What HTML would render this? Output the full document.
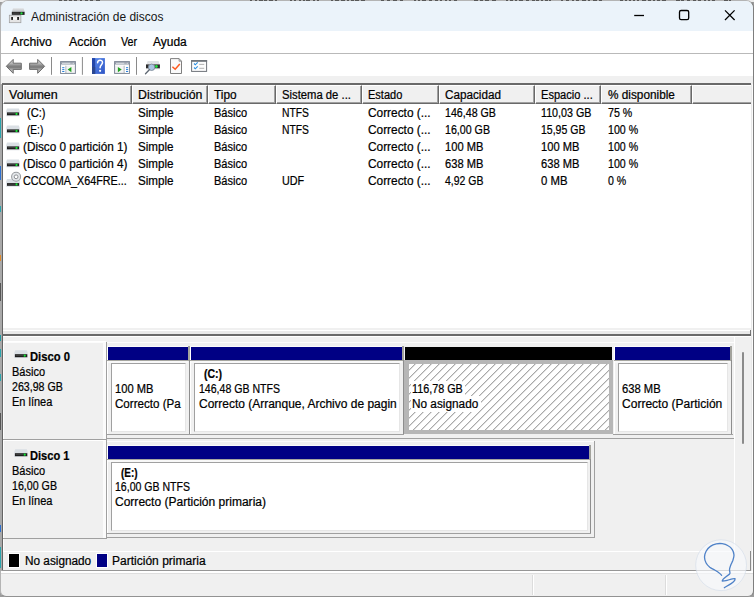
<!DOCTYPE html>
<html lang="es">
<head>
<meta charset="utf-8">
<title>Administración de discos</title>
<style>
html,body{margin:0;padding:0}
body{width:754px;height:597px;overflow:hidden;position:relative;background:#9c9c9c;font-family:"Liberation Sans",sans-serif;font-size:12px;color:#000}
div,span,svg{position:absolute;box-sizing:border-box}
section,header,nav,main,footer{display:block;position:static}
.t{white-space:pre;line-height:16px;font-size:12px;transform-origin:0 0;color:#000;-webkit-text-stroke:0.22px #000}
.b{font-weight:bold}
.wb{background:#fff}
.ttl{-webkit-text-stroke:0;color:#161616}
.hc{background:#f0f0f0;border-left:1px solid #fff;border-top:1px solid #fff}
</style>
</head>
<body>

<div style="left:0px;top:0px;width:754px;height:1.5px;background:#ececec;"></div>
<section id="window">
<div style="left:0px;top:0.4px;width:754px;height:596.3px;background:#f0f0f0;border-radius:8px 8px 6px 6px;border:1px solid #b4b4b4;border-right-color:#7e7e7e;border-bottom-color:#929292;overflow:hidden;"><div style="left:0px;top:0px;width:753px;height:29.2px;background:#ebf3fa;"></div><div style="left:0px;top:29.2px;width:753px;height:23.8px;background:#fff;"></div></div>
<div style="left:59px;top:0px;width:3px;height:0.8px;background:#585858;"></div>
<div style="left:64px;top:0px;width:3px;height:0.8px;background:#585858;"></div>
<div style="left:69px;top:0px;width:3px;height:0.8px;background:#585858;"></div>
<div style="left:74px;top:0px;width:3px;height:0.8px;background:#585858;"></div>
<div style="left:80px;top:0px;width:2px;height:0.8px;background:#585858;"></div>
<div style="left:85px;top:0px;width:3px;height:0.8px;background:#585858;"></div>
<div style="left:90px;top:0px;width:3px;height:0.8px;background:#585858;"></div>
<div style="left:96px;top:0px;width:4px;height:0.8px;background:#585858;"></div>
<div style="left:250px;top:0px;width:2px;height:0.8px;background:#585858;"></div>
<div style="left:255px;top:0px;width:2px;height:0.8px;background:#585858;"></div>
<div style="left:258.5px;top:0px;width:4px;height:0.8px;background:#585858;"></div>
<div style="left:264px;top:0px;width:3px;height:0.8px;background:#585858;"></div>
<div style="left:268.5px;top:0px;width:4px;height:0.8px;background:#585858;"></div>
<div style="left:274.5px;top:0px;width:2px;height:0.8px;background:#585858;"></div>
<div style="left:290px;top:0px;width:2px;height:0.8px;background:#585858;"></div>
<div style="left:294px;top:0px;width:2px;height:0.8px;background:#585858;"></div>
<div style="left:299px;top:0px;width:2px;height:0.8px;background:#585858;"></div>
<div style="left:302.5px;top:0px;width:2px;height:0.8px;background:#585858;"></div>
<div style="left:306px;top:0px;width:4px;height:0.8px;background:#585858;"></div>
<div style="left:313px;top:0px;width:2px;height:0.8px;background:#585858;"></div>
<div style="left:317px;top:0px;width:2px;height:0.8px;background:#585858;"></div>
<div style="left:331px;top:0px;width:2px;height:0.8px;background:#585858;"></div>
<div style="left:334.5px;top:0px;width:4px;height:0.8px;background:#585858;"></div>
<div style="left:340.5px;top:0px;width:4px;height:0.8px;background:#585858;"></div>
<div style="left:346.5px;top:0px;width:2px;height:0.8px;background:#585858;"></div>
<div style="left:350.5px;top:0px;width:3px;height:0.8px;background:#585858;"></div>
<div style="left:355px;top:0px;width:4px;height:0.8px;background:#585858;"></div>
<div style="left:360.5px;top:0px;width:4px;height:0.8px;background:#585858;"></div>
<div style="left:381px;top:0px;width:3px;height:0.8px;background:#585858;"></div>
<div style="left:387px;top:0px;width:3px;height:0.8px;background:#585858;"></div>
<div style="left:393px;top:0px;width:4px;height:0.8px;background:#585858;"></div>
<div style="left:400px;top:0px;width:3px;height:0.8px;background:#585858;"></div>
<div style="left:414px;top:0px;width:2px;height:0.8px;background:#585858;"></div>
<div style="left:418px;top:0px;width:2px;height:0.8px;background:#585858;"></div>
<div style="left:422px;top:0px;width:4px;height:0.8px;background:#585858;"></div>
<div style="left:429px;top:0px;width:3px;height:0.8px;background:#585858;"></div>
<div style="left:435px;top:0px;width:3px;height:0.8px;background:#585858;"></div>
<div style="left:439.5px;top:0px;width:2px;height:0.8px;background:#585858;"></div>
<div style="left:444.5px;top:0px;width:2px;height:0.8px;background:#585858;"></div>
<div style="left:448.5px;top:0px;width:2px;height:0.8px;background:#585858;"></div>
<div style="left:453.5px;top:0px;width:3px;height:0.8px;background:#585858;"></div>
<div style="left:474px;top:0px;width:4px;height:0.8px;background:#585858;"></div>
<div style="left:480px;top:0px;width:3px;height:0.8px;background:#585858;"></div>
<div style="left:485px;top:0px;width:4px;height:0.8px;background:#585858;"></div>
<div style="left:492px;top:0px;width:4px;height:0.8px;background:#585858;"></div>
<div style="left:506px;top:0px;width:2px;height:0.8px;background:#585858;"></div>
<div style="left:510px;top:0px;width:3px;height:0.8px;background:#585858;"></div>
<div style="left:514.5px;top:0px;width:2px;height:0.8px;background:#585858;"></div>
<div style="left:518.5px;top:0px;width:4px;height:0.8px;background:#585858;"></div>
<div style="left:525.5px;top:0px;width:3px;height:0.8px;background:#585858;"></div>
<div style="left:531.5px;top:0px;width:3px;height:0.8px;background:#585858;"></div>
<div style="left:536px;top:0px;width:3px;height:0.8px;background:#585858;"></div>
<div style="left:541px;top:0px;width:2px;height:0.8px;background:#585858;"></div>
<div style="left:544.5px;top:0px;width:3px;height:0.8px;background:#585858;"></div>
<div style="left:549px;top:0px;width:2px;height:0.8px;background:#585858;"></div>
<div style="left:561px;top:0px;width:2px;height:0.8px;background:#585858;"></div>
<div style="left:566px;top:0px;width:3px;height:0.8px;background:#585858;"></div>
<div style="left:572px;top:0px;width:2px;height:0.8px;background:#585858;"></div>
<div style="left:576px;top:0px;width:3px;height:0.8px;background:#585858;"></div>
<div style="left:582px;top:0px;width:4px;height:0.8px;background:#585858;"></div>
<div style="left:588px;top:0px;width:2px;height:0.8px;background:#585858;"></div>
<div style="left:593px;top:0px;width:4px;height:0.8px;background:#585858;"></div>
<div style="left:599px;top:0px;width:3px;height:0.8px;background:#585858;"></div>
<div style="left:620px;top:0px;width:3px;height:0.8px;background:#585858;"></div>
<div style="left:625px;top:0px;width:2px;height:0.8px;background:#585858;"></div>
<div style="left:628.5px;top:0px;width:2px;height:0.8px;background:#585858;"></div>
<div style="left:632.5px;top:0px;width:2px;height:0.8px;background:#585858;"></div>
<div style="left:636.5px;top:0px;width:2px;height:0.8px;background:#585858;"></div>
<div style="left:641.5px;top:0px;width:4px;height:0.8px;background:#585858;"></div>
<div style="left:647.5px;top:0px;width:3px;height:0.8px;background:#585858;"></div>
<div style="left:652.5px;top:0px;width:2px;height:0.8px;background:#585858;"></div>
<div style="left:656.5px;top:0px;width:3px;height:0.8px;background:#585858;"></div>
<div style="left:661.5px;top:0px;width:4px;height:0.8px;background:#585858;"></div>
<div style="left:675.5px;top:0px;width:4px;height:0.8px;background:#585858;"></div>
<div style="left:681px;top:0px;width:3px;height:0.8px;background:#585858;"></div>
<div style="left:687px;top:0px;width:3px;height:0.8px;background:#585858;"></div>
<div style="left:693px;top:0px;width:3px;height:0.8px;background:#585858;"></div>
<div style="left:697.5px;top:0px;width:3px;height:0.8px;background:#585858;"></div>
<div style="left:703.5px;top:0px;width:2px;height:0.8px;background:#585858;"></div>
<div style="left:707.5px;top:0px;width:2px;height:0.8px;background:#585858;"></div>
<div style="left:711.5px;top:0px;width:3px;height:0.8px;background:#585858;"></div>
<div style="left:723.5px;top:0px;width:4px;height:0.8px;background:#585858;"></div>
<div style="left:729px;top:0px;width:2px;height:0.8px;background:#585858;"></div>
<header id="titlebar">
<svg style="left:8px;top:6px" width="20" height="18" viewBox="8 6 20 18">
<defs><linearGradient id="dg" x1="0" y1="0" x2="0" y2="1"><stop offset="0" stop-color="#e0e2e4"/><stop offset="1" stop-color="#bfc2c6"/></linearGradient></defs>
<path d="M13 8.2h10.6l1 3.6H11.9z" fill="url(#dg)"/>
<rect x="11.8" y="11.8" width="12.8" height="3.1" fill="#222"/>
<rect x="12.6" y="12.7" width="7" height="0.8" fill="#555"/>
<circle cx="21.5" cy="13.4" r="1.15" fill="#1fe03a"/>
<rect x="9.3" y="15.2" width="11.6" height="7.5" fill="#e4e4e4" stroke="#9a9a9a" stroke-width="0.7"/>
<rect x="11.2" y="17" width="1.8" height="2.9" fill="#222"/>
<rect x="17.1" y="17" width="1.9" height="2.9" fill="#222"/>
<rect x="13" y="17.4" width="4.1" height="2.2" fill="#fafafa"/>
</svg>
<span class="t ttl" style="left:31.10px;top:8.50px;transform:scaleX(0.9975)">Administración de discos</span>
<svg style="left:630px;top:6px" width="112" height="20" viewBox="630 6 112 20" fill="none" stroke="#000" stroke-width="1.3">
<path d="M634.2 15.5h9.8"/>
<rect x="679.5" y="10.5" width="9.2" height="9.2" rx="1.6"/>
<path d="M725 10.4l9.6 9.6M734.6 10.4l-9.6 9.6"/>
</svg>
</header>
<nav id="menubar">
<span class="t" style="left:10.80px;top:33.70px;transform:scaleX(1.0213)">Archivo</span>
<span class="t" style="left:68.50px;top:33.70px;transform:scaleX(1.0299)">Acción</span>
<span class="t" style="left:121.20px;top:33.70px;transform:scaleX(0.8881)">Ver</span>
<span class="t" style="left:153.00px;top:33.70px;transform:scaleX(0.9961)">Ayuda</span>
<div style="left:1px;top:52.6px;width:752px;height:1px;background:#b9b9b9;"></div>
</nav>
<div id="toolbar" style="left:1px;top:53.6px;width:752px;height:22.6px;background:#fff"></div>
<svg style="left:0;top:54px" width="220" height="24" viewBox="0 54 220 24">
<defs>
<linearGradient id="ag" x1="0" y1="0" x2="0" y2="1"><stop offset="0" stop-color="#d6d6d6"/><stop offset="0.3" stop-color="#b4b4b4"/><stop offset="0.46" stop-color="#868686"/><stop offset="0.56" stop-color="#787878"/><stop offset="0.7" stop-color="#a6a6a6"/><stop offset="1" stop-color="#cccccc"/></linearGradient>
<linearGradient id="hg" x1="0" y1="0" x2="1" y2="1"><stop offset="0" stop-color="#5d8ff0"/><stop offset="1" stop-color="#2f55c4"/></linearGradient>
</defs>
<!-- back / forward -->
<path d="M6.3 66.3L13.2 59.4V63.2H21.3V69.4H13.2V73.3Z" fill="url(#ag)" stroke="#6c6c6c" stroke-width="1" stroke-linejoin="round"/>
<path d="M44.6 66.3L37.7 59.4V63.2H29.6V69.4H37.7V73.3Z" fill="url(#ag)" stroke="#6c6c6c" stroke-width="1" stroke-linejoin="round"/>
<!-- separators -->
<path d="M51.5 57v17.8M82.4 57v17.8M136.5 57v17.8" stroke="#8a8a8a" stroke-width="1"/>
<!-- show/hide console tree -->
<rect x="60.6" y="61.6" width="14.8" height="11.8" fill="#f4f4f4" stroke="#7c8594" stroke-width="1"/>
<rect x="61.1" y="62.1" width="13.8" height="2.6" fill="#8a93a1"/>
<rect x="62" y="62.8" width="8.6" height="0.8" fill="#fff"/>
<rect x="71.6" y="62.8" width="0.9" height="0.9" fill="#fff"/><rect x="73.2" y="62.8" width="0.9" height="0.9" fill="#fff"/>
<rect x="61.1" y="64.7" width="13.8" height="0.8" fill="#fff"/>
<rect x="65.4" y="65.8" width="0.8" height="7.2" fill="#7c8594"/>
<rect x="61.1" y="65.6" width="4.3" height="7.3" fill="#fff"/>
<path d="M62.2 67.7h2.2M62.2 69.6h2.2M62.2 71.5h2.2" stroke="#2b80d8" stroke-width="1"/>
<path d="M71.4 66.9v5.4l-3.8-2.7z" fill="#21a121"/>
<!-- help -->
<rect x="92" y="58.1" width="12.9" height="15.8" fill="url(#hg)"/>
<rect x="92" y="58.1" width="3.2" height="15.8" fill="#2446a8"/>
<rect x="92" y="67" width="3.2" height="6.9" fill="#2a4690"/>
<path d="M97.6 62.8c0-3.4 4.9-3.4 4.9-0.3c0 2-2.4 2.5-2.4 5.2" fill="none" stroke="#fff" stroke-width="1.5" stroke-linecap="round"/>
<circle cx="100.1" cy="70.8" r="1.1" fill="#fff"/>
<!-- show/hide action pane -->
<rect x="114.6" y="61.6" width="14.8" height="11.8" fill="#f4f4f4" stroke="#7c8594" stroke-width="1"/>
<rect x="115.1" y="62.1" width="13.8" height="2.6" fill="#8a93a1"/>
<rect x="116" y="62.8" width="8.6" height="0.8" fill="#fff"/>
<rect x="125.6" y="62.8" width="0.9" height="0.9" fill="#fff"/><rect x="127.2" y="62.8" width="0.9" height="0.9" fill="#fff"/>
<rect x="115.1" y="64.7" width="13.8" height="0.8" fill="#fff"/>
<rect x="123.8" y="65.8" width="0.8" height="7.2" fill="#7c8594"/>
<rect x="124.6" y="65.6" width="4.3" height="7.3" fill="#fff"/>
<path d="M126 67.7h2.2M126 69.6h2.2M126 71.5h2.2" stroke="#2b80d8" stroke-width="1"/>
<path d="M117.9 66.9v5.4l3.8-2.7z" fill="#21a121"/>
<!-- drive + magnifier -->
<path d="M147.6 61h11l1 3.4h-13z" fill="#dfe2e5"/>
<rect x="146" y="64.4" width="13.9" height="4.2" fill="#2a2a2a"/>
<rect x="146" y="68.4" width="13.9" height="0.8" fill="#d0d3d6"/>
<circle cx="156.4" cy="66.5" r="1.4" fill="#20e040"/>
<circle cx="151.6" cy="67.3" r="3.2" fill="#a9c4e2" stroke="#7f8b99" stroke-width="0.9"/>
<path d="M149.3 69.8l-3.8 3.9" stroke="#5f6873" stroke-width="1.3" stroke-linecap="round"/>
<!-- doc + check -->
<path d="M170.5 58.6h8.6l2.4 2.6v12.3h-11z" fill="#fafafa" stroke="#7f7f7f" stroke-width="1" stroke-linejoin="round"/>
<path d="M179.1 58.6v2.6h2.4" fill="none" stroke="#7f7f7f" stroke-width="0.8"/>
<path d="M172.4 66.8l2.8 2.5l4.6-5.2" fill="none" stroke="#ff5a1e" stroke-width="1.5"/>
<!-- checklist window -->
<rect x="191.6" y="60.6" width="15" height="10.8" fill="#fcfcfc" stroke="#6f747a" stroke-width="1"/>
<rect x="191.1" y="60.1" width="16" height="1.7" fill="#6f747a"/>
<path d="M194 63.5l1.3 1.3l2.4-2.4M194 67.5l1.3 1.3l2.4-2.4" fill="none" stroke="#2b8fe0" stroke-width="1.1"/>
<path d="M199.2 64.4h5M199.2 68.3h5" stroke="#a0a0a0" stroke-width="0.8"/>
</svg>
<main id="volume-list">
<div style="left:2px;top:83px;width:749.3px;height:1.5px;background:#696969;"></div>
<div style="left:0px;top:84px;width:2.2px;height:487px;background:#a9a9a9;"></div>
<div style="left:2.2px;top:84px;width:1px;height:487px;background:#646464;"></div>
<div style="left:3.2px;top:84.5px;width:748.1px;height:243.8px;background:#fff;"></div>
<div class="hc" style="left:3.2px;top:84.5px;width:128.6px;height:19.1px;border-right:1px solid #696969;border-bottom:1px solid #696969;"><div style="right:0;bottom:0;left:0;top:0;border-right:1px solid #a0a0a0;border-bottom:1px solid #a0a0a0"></div></div>
<div class="hc" style="left:131.8px;top:84.5px;width:76px;height:19.1px;border-right:1px solid #696969;border-bottom:1px solid #696969;"><div style="right:0;bottom:0;left:0;top:0;border-right:1px solid #a0a0a0;border-bottom:1px solid #a0a0a0"></div></div>
<div class="hc" style="left:207.8px;top:84.5px;width:67.8px;height:19.1px;border-right:1px solid #696969;border-bottom:1px solid #696969;"><div style="right:0;bottom:0;left:0;top:0;border-right:1px solid #a0a0a0;border-bottom:1px solid #a0a0a0"></div></div>
<div class="hc" style="left:275.6px;top:84.5px;width:86px;height:19.1px;border-right:1px solid #696969;border-bottom:1px solid #696969;"><div style="right:0;bottom:0;left:0;top:0;border-right:1px solid #a0a0a0;border-bottom:1px solid #a0a0a0"></div></div>
<div class="hc" style="left:361.6px;top:84.5px;width:77px;height:19.1px;border-right:1px solid #696969;border-bottom:1px solid #696969;"><div style="right:0;bottom:0;left:0;top:0;border-right:1px solid #a0a0a0;border-bottom:1px solid #a0a0a0"></div></div>
<div class="hc" style="left:438.6px;top:84.5px;width:96.2px;height:19.1px;border-right:1px solid #696969;border-bottom:1px solid #696969;"><div style="right:0;bottom:0;left:0;top:0;border-right:1px solid #a0a0a0;border-bottom:1px solid #a0a0a0"></div></div>
<div class="hc" style="left:534.8px;top:84.5px;width:66px;height:19.1px;border-right:1px solid #696969;border-bottom:1px solid #696969;"><div style="right:0;bottom:0;left:0;top:0;border-right:1px solid #a0a0a0;border-bottom:1px solid #a0a0a0"></div></div>
<div class="hc" style="left:600.8px;top:84.5px;width:90.8px;height:19.1px;border-right:1px solid #696969;border-bottom:1px solid #696969;"><div style="right:0;bottom:0;left:0;top:0;border-right:1px solid #a0a0a0;border-bottom:1px solid #a0a0a0"></div></div>
<div class="hc" style="left:691.6px;top:84.5px;width:59.7px;height:19.1px;border-bottom:1px solid #696969;"><div style="right:0;bottom:0;left:0;top:0;border-bottom:1px solid #a0a0a0"></div></div>
<span class="t" style="left:8.70px;top:86.50px;transform:scaleX(1.0451)">Volumen</span>
<span class="t" style="left:138.20px;top:86.50px;transform:scaleX(1.0272)">Distribución</span>
<span class="t" style="left:214.20px;top:86.50px;transform:scaleX(0.9860)">Tipo</span>
<span class="t" style="left:282.20px;top:86.50px;transform:scaleX(0.9393)">Sistema de ...</span>
<span class="t" style="left:368.20px;top:86.50px;transform:scaleX(0.9181)">Estado</span>
<span class="t" style="left:445.20px;top:86.50px;transform:scaleX(0.9753)">Capacidad</span>
<span class="t" style="left:541.40px;top:86.50px;transform:scaleX(0.9229)">Espacio ...</span>
<span class="t" style="left:607.70px;top:86.50px;transform:scaleX(0.9829)">% disponible</span>
<svg style="left:6px;top:107.5px" width="15" height="9" viewBox="6 107.5 15 9">
<path d="M7 108h11.9l0.8 2.4v5.3H6.2v-5.3z" fill="#dadfe4"/>
<rect x="7" y="111.9" width="12.1" height="2.9" fill="#1e1e1e"/>
<rect x="7.6" y="112.8" width="7.5" height="0.7" fill="#4a4a4a"/>
<circle cx="16.5" cy="113.4" r="1.15" fill="#16e436"/>
</svg>
<svg style="left:6px;top:124.5px" width="15" height="9" viewBox="6 107.5 15 9">
<path d="M7 108h11.9l0.8 2.4v5.3H6.2v-5.3z" fill="#dadfe4"/>
<rect x="7" y="111.9" width="12.1" height="2.9" fill="#1e1e1e"/>
<rect x="7.6" y="112.8" width="7.5" height="0.7" fill="#4a4a4a"/>
<circle cx="16.5" cy="113.4" r="1.15" fill="#16e436"/>
</svg>
<svg style="left:6px;top:141.5px" width="15" height="9" viewBox="6 107.5 15 9">
<path d="M7 108h11.9l0.8 2.4v5.3H6.2v-5.3z" fill="#dadfe4"/>
<rect x="7" y="111.9" width="12.1" height="2.9" fill="#1e1e1e"/>
<rect x="7.6" y="112.8" width="7.5" height="0.7" fill="#4a4a4a"/>
<circle cx="16.5" cy="113.4" r="1.15" fill="#16e436"/>
</svg>
<svg style="left:6px;top:158.5px" width="15" height="9" viewBox="6 107.5 15 9">
<path d="M7 108h11.9l0.8 2.4v5.3H6.2v-5.3z" fill="#dadfe4"/>
<rect x="7" y="111.9" width="12.1" height="2.9" fill="#1e1e1e"/>
<rect x="7.6" y="112.8" width="7.5" height="0.7" fill="#4a4a4a"/>
<circle cx="16.5" cy="113.4" r="1.15" fill="#16e436"/>
</svg>
<svg style="left:6px;top:171px" width="16" height="17" viewBox="6 171 16 17">
<path d="M7 179h12.1l0.8 2.4v5.3H6.2v-5.3z" fill="#dadfe4"/>
<circle cx="16.1" cy="176.8" r="4.5" fill="#e3e6e9" stroke="#989b9f" stroke-width="1.05"/>
<circle cx="16.1" cy="176.8" r="1.9" fill="#fff" stroke="#8e9195" stroke-width="1"/>
<rect x="7" y="183.1" width="12.1" height="2.7" fill="#1e1e1e"/>
<rect x="7.6" y="183.9" width="7.5" height="0.7" fill="#4a4a4a"/>
<circle cx="16.5" cy="184.4" r="1.15" fill="#16e436"/>
</svg>
<span class="t" style="left:26.60px;top:104.50px;transform:scaleX(0.9252)">(C:)</span>
<span class="t" style="left:138.20px;top:104.50px;transform:scaleX(0.9674)">Simple</span>
<span class="t" style="left:214.20px;top:104.50px;transform:scaleX(0.9190)">Básico</span>
<span class="t" style="left:282.20px;top:104.50px;transform:scaleX(0.8587)">NTFS</span>
<span class="t" style="left:368.20px;top:104.50px;transform:scaleX(0.9887)">Correcto (...</span>
<span class="t" style="left:445.20px;top:104.50px;transform:scaleX(0.8872)">146,48 GB</span>
<span class="t" style="left:541.40px;top:104.50px;transform:scaleX(0.8923)">110,03 GB</span>
<span class="t" style="left:607.70px;top:104.50px;transform:scaleX(0.8851)">75 %</span>
<span class="t" style="left:26.60px;top:121.50px;transform:scaleX(0.8431)">(E:)</span>
<span class="t" style="left:138.20px;top:121.50px;transform:scaleX(0.9674)">Simple</span>
<span class="t" style="left:214.20px;top:121.50px;transform:scaleX(0.9190)">Básico</span>
<span class="t" style="left:282.20px;top:121.50px;transform:scaleX(0.8587)">NTFS</span>
<span class="t" style="left:368.20px;top:121.50px;transform:scaleX(0.9887)">Correcto (...</span>
<span class="t" style="left:445.20px;top:121.50px;transform:scaleX(0.8876)">16,00 GB</span>
<span class="t" style="left:541.40px;top:121.50px;transform:scaleX(0.8758)">15,95 GB</span>
<span class="t" style="left:607.70px;top:121.50px;transform:scaleX(0.8849)">100 %</span>
<span class="t" style="left:23.20px;top:138.50px;transform:scaleX(0.9784)">(Disco 0 partición 1)</span>
<span class="t" style="left:138.20px;top:138.50px;transform:scaleX(0.9674)">Simple</span>
<span class="t" style="left:214.20px;top:138.50px;transform:scaleX(0.9190)">Básico</span>
<span class="t" style="left:368.20px;top:138.50px;transform:scaleX(0.9887)">Correcto (...</span>
<span class="t" style="left:445.20px;top:138.50px;transform:scaleX(0.9286)">100 MB</span>
<span class="t" style="left:541.40px;top:138.50px;transform:scaleX(0.9286)">100 MB</span>
<span class="t" style="left:607.70px;top:138.50px;transform:scaleX(0.8849)">100 %</span>
<span class="t" style="left:23.20px;top:155.50px;transform:scaleX(0.9784)">(Disco 0 partición 4)</span>
<span class="t" style="left:138.20px;top:155.50px;transform:scaleX(0.9674)">Simple</span>
<span class="t" style="left:214.20px;top:155.50px;transform:scaleX(0.9190)">Básico</span>
<span class="t" style="left:368.20px;top:155.50px;transform:scaleX(0.9887)">Correcto (...</span>
<span class="t" style="left:445.20px;top:155.50px;transform:scaleX(0.9286)">638 MB</span>
<span class="t" style="left:541.40px;top:155.50px;transform:scaleX(0.9286)">638 MB</span>
<span class="t" style="left:607.70px;top:155.50px;transform:scaleX(0.8849)">100 %</span>
<span class="t" style="left:23.20px;top:172.50px;transform:scaleX(0.8989)">CCCOMA_X64FRE...</span>
<span class="t" style="left:138.20px;top:172.50px;transform:scaleX(0.9674)">Simple</span>
<span class="t" style="left:214.20px;top:172.50px;transform:scaleX(0.9190)">Básico</span>
<span class="t" style="left:282.20px;top:172.50px;transform:scaleX(0.9000)">UDF</span>
<span class="t" style="left:368.20px;top:172.50px;transform:scaleX(0.9887)">Correcto (...</span>
<span class="t" style="left:445.20px;top:172.50px;transform:scaleX(0.8723)">4,92 GB</span>
<span class="t" style="left:541.40px;top:172.50px;transform:scaleX(0.9463)">0 MB</span>
<span class="t" style="left:607.70px;top:172.50px;transform:scaleX(0.8806)">0 %</span>
<div style="left:3.2px;top:328.3px;width:748.1px;height:1.9px;background:#f0f0f0;"></div>
<div style="left:3.2px;top:330.2px;width:748.1px;height:1.1px;background:#fff;"></div>
<div style="left:3.2px;top:331.3px;width:748.1px;height:2.9px;background:#e9e9e9;"></div>
<div style="left:749.6px;top:330.2px;width:1.2px;height:4.8px;background:#777;"></div>
<div style="left:2.2px;top:334.2px;width:748.6px;height:1.4px;background:#696969;"></div>
<div style="left:3.2px;top:335.6px;width:748.1px;height:1px;background:#fff;"></div>
<div style="left:751.3px;top:84px;width:0.9px;height:487px;background:#e8e8e8;"></div>
<div style="left:752.2px;top:84px;width:0.8px;height:487px;background:#fbfbfb;"></div>
<div style="left:0px;top:118px;width:0.9px;height:20px;background:#2aa5ad;"></div>
<div style="left:0px;top:166px;width:0.9px;height:14px;background:#2c6fcf;"></div>
<div style="left:0px;top:206px;width:0.9px;height:6px;background:#2aa5ad;"></div>
<div style="left:0px;top:255px;width:0.9px;height:6px;background:#e08a2a;"></div>
<div style="left:0px;top:283px;width:0.9px;height:18px;background:#555;"></div>
<div style="left:0px;top:335px;width:0.9px;height:6px;background:#1f9aa2;"></div>
<div style="left:0px;top:349px;width:0.9px;height:8px;background:#2aa5ad;"></div>
<div style="left:0px;top:374px;width:0.9px;height:7px;background:#2aa5ad;"></div>
<div style="left:0px;top:413px;width:0.9px;height:17px;background:#555;"></div>
<div style="left:0px;top:525px;width:0.9px;height:7px;background:#2c6fcf;"></div>
<div style="left:0px;top:547px;width:0.9px;height:21px;background:#2aa5ad;"></div>
</main>
<main id="graphical-view">
<div style="left:3.2px;top:336.6px;width:748.1px;height:234.4px;background:#f0f0f0;"></div>
<div style="left:3.2px;top:341px;width:1px;height:210px;background:#fff;"></div>
<div style="left:3.2px;top:341px;width:102.8px;height:1px;background:#fff;"></div>
<div style="left:3.2px;top:341.6px;width:731.3px;height:1.2px;background:#fcfcfc;"></div>
<div style="left:734.3px;top:336.6px;width:1.2px;height:214.9px;background:#fff;"></div>
<div style="left:103.2px;top:342px;width:2.8px;height:197px;background:#fbfbfb;"></div>
<div style="left:3.2px;top:439px;width:102.6px;height:1.1px;background:#a0a0a0;"></div>
<div style="left:3.2px;top:440.1px;width:102.6px;height:1.1px;background:#fff;"></div>
<div style="left:3.2px;top:538px;width:102.6px;height:1.1px;background:#a0a0a0;"></div>
<div style="left:106px;top:341.5px;width:1.1px;height:197.5px;background:#a0a0a0;"></div>
<svg style="left:14.2px;top:349.6px" width="15" height="9" viewBox="0 0 15 9">
<path d="M1.2 0.3h11.6l0.9 2.5v5.3H0.3V2.8z" fill="#dadfe4"/>
<rect x="0.9" y="4.2" width="12.4" height="3" fill="#1e1e1e"/>
<rect x="1.6" y="5.2" width="7.6" height="0.7" fill="#4a4a4a"/>
<circle cx="10.7" cy="5.7" r="1.15" fill="#16e436"/>
</svg>
<svg style="left:13.9px;top:448.8px" width="15" height="9" viewBox="0 0 15 9">
<path d="M1.2 0.3h11.6l0.9 2.5v5.3H0.3V2.8z" fill="#dadfe4"/>
<rect x="0.9" y="4.2" width="12.4" height="3" fill="#1e1e1e"/>
<rect x="1.6" y="5.2" width="7.6" height="0.7" fill="#4a4a4a"/>
<circle cx="10.7" cy="5.7" r="1.15" fill="#16e436"/>
</svg>
<div style="left:106.8px;top:345.8px;width:1.2px;height:88.2px;background:#fff;"></div><div style="left:106.8px;top:345.7px;width:81.4px;height:1.1px;background:#fbfbfb;"></div><div style="left:108px;top:346.8px;width:80.2px;height:13.1px;background:#000084;"></div><div style="left:106.8px;top:359.9px;width:82.4px;height:1px;background:#a6a6a0;"></div><div style="left:108px;top:360.9px;width:80.2px;height:2.2px;background:#f8f8f8;"></div><div style="left:111px;top:363.1px;width:75.4px;height:68.6px;background:#fff;border-left:1.1px solid #a0a0a0;border-top:1.1px solid #a0a0a0;border-right:1px solid #e6e6e6;border-bottom:1px solid #e6e6e6;"></div><div style="left:188.2px;top:346.2px;width:1.5px;height:13.7px;background:#a2a29c;"></div><div style="left:188.9px;top:359.9px;width:1.1px;height:74.1px;background:#8e8e8e;"></div>
<div style="left:189.9px;top:345.8px;width:1.2px;height:88.2px;background:#fff;"></div><div style="left:189.9px;top:345.7px;width:212.4px;height:1.1px;background:#fbfbfb;"></div><div style="left:191.1px;top:346.8px;width:211.2px;height:13.1px;background:#000084;"></div><div style="left:189.9px;top:359.9px;width:213.4px;height:1px;background:#a6a6a0;"></div><div style="left:191.1px;top:360.9px;width:211.2px;height:2.2px;background:#f8f8f8;"></div><div style="left:194.1px;top:363.1px;width:206.4px;height:68.6px;background:#fff;border-left:1.1px solid #a0a0a0;border-top:1.1px solid #a0a0a0;border-right:1px solid #e6e6e6;border-bottom:1px solid #e6e6e6;"></div><div style="left:402.3px;top:346.2px;width:1.5px;height:13.7px;background:#a2a29c;"></div><div style="left:403px;top:359.9px;width:1.1px;height:74.1px;background:#8e8e8e;"></div>
<div style="left:613.8px;top:345.8px;width:1.2px;height:88.2px;background:#fff;"></div><div style="left:613.8px;top:345.7px;width:116.4px;height:1.1px;background:#fbfbfb;"></div><div style="left:615px;top:346.8px;width:115.2px;height:13.1px;background:#000084;"></div><div style="left:613.8px;top:359.9px;width:117.4px;height:1px;background:#a6a6a0;"></div><div style="left:615px;top:360.9px;width:115.2px;height:2.2px;background:#f8f8f8;"></div><div style="left:618px;top:363.1px;width:110.4px;height:68.6px;background:#fff;border-left:1.1px solid #a0a0a0;border-top:1.1px solid #a0a0a0;border-right:1px solid #e6e6e6;border-bottom:1px solid #e6e6e6;"></div><div style="left:730.2px;top:346.2px;width:1.5px;height:13.7px;background:#a2a29c;"></div><div style="left:730.9px;top:359.9px;width:1.1px;height:74.1px;background:#8e8e8e;"></div>
<div style="left:404.8px;top:346.8px;width:207px;height:13px;background:#000;"></div>
<div style="left:404px;top:359.9px;width:208.7px;height:74.1px;background:#b6b6b6;"></div>
<svg style="left:408.6px;top:363.7px" width="200" height="66.2" viewBox="0 0 200 66.2">
<defs><pattern id="hz" width="8" height="8" patternUnits="userSpaceOnUse"><rect width="8" height="8" fill="#fff"/><path d="M-1 7.3L7.3 -1M5.3 9L9 5.3" stroke="#7c7c7c" stroke-width="0.95"/></pattern></defs>
<rect width="200" height="66.2" fill="url(#hz)"/></svg>
<div style="left:411px;top:383px;width:53.5px;height:13px;background:#fff;"></div>
<div style="left:411px;top:396px;width:69.5px;height:14px;background:#fff;"></div>
<div style="left:107px;top:434px;width:296.5px;height:1.1px;background:#a0a0a0;"></div>
<div style="left:612.7px;top:434px;width:120.3px;height:1.1px;background:#a0a0a0;"></div>
<div style="left:107px;top:438px;width:627px;height:1.1px;background:#a0a0a0;"></div>
<div style="left:107px;top:441.2px;width:488px;height:1.1px;background:#fcfcfc;"></div>
<div style="left:106.8px;top:445px;width:1.2px;height:88.2px;background:#fff;"></div><div style="left:106.8px;top:444.9px;width:482.6px;height:1.1px;background:#fbfbfb;"></div><div style="left:108px;top:446px;width:481.4px;height:13.1px;background:#000084;"></div><div style="left:106.8px;top:459.1px;width:483.6px;height:1px;background:#a6a6a0;"></div><div style="left:108px;top:460.1px;width:481.4px;height:2.2px;background:#f8f8f8;"></div><div style="left:111px;top:462.3px;width:476.6px;height:68.6px;background:#fff;border-left:1.1px solid #a0a0a0;border-top:1.1px solid #a0a0a0;border-right:1px solid #e6e6e6;border-bottom:1px solid #e6e6e6;"></div><div style="left:589.4px;top:445.4px;width:1.5px;height:13.7px;background:#a2a29c;"></div><div style="left:590.1px;top:459.1px;width:1.1px;height:74.1px;background:#8e8e8e;"></div>
<div style="left:594px;top:441px;width:1.1px;height:97px;background:#a0a0a0;"></div>
<div style="left:107px;top:533px;width:484px;height:1.1px;background:#a0a0a0;"></div>
<div style="left:107px;top:537px;width:488.1px;height:1.1px;background:#a0a0a0;"></div>
<span class="t b" style="left:30.10px;top:349.10px;transform:scaleX(0.9346)">Disco 0</span>
<span class="t" style="left:12.20px;top:363.90px;transform:scaleX(0.9163)">Básico</span>
<span class="t" style="left:12.20px;top:378.90px;transform:scaleX(0.8855)">263,98 GB</span>
<span class="t" style="left:12.20px;top:393.90px;transform:scaleX(0.9153)">En línea</span>
<span class="t" style="left:115.40px;top:380.90px;transform:scaleX(0.9286)">100 MB</span>
<span class="t" style="left:115.40px;top:395.90px;transform:scaleX(0.9657)">Correcto (Pa</span>
<span class="t b" style="left:204.20px;top:366.10px;transform:scaleX(0.8762)">(C:)</span>
<span class="t" style="left:198.50px;top:380.90px;transform:scaleX(0.8801)">146,48 GB NTFS</span>
<span class="t" style="left:198.50px;top:395.90px;transform:scaleX(0.9980)">Correcto (Arranque, Archivo de pagin</span>
<span class="t wb" style="left:412.30px;top:380.90px;transform:scaleX(0.8977)">116,78 GB</span>
<span class="t wb" style="left:412.30px;top:395.90px;transform:scaleX(0.9836)">No asignado</span>
<span class="t" style="left:622.30px;top:380.90px;transform:scaleX(0.9359)">638 MB</span>
<span class="t" style="left:622.30px;top:395.90px;transform:scaleX(1.0024)">Correcto (Partición</span>
<span class="t b" style="left:29.90px;top:448.30px;transform:scaleX(0.9253)">Disco 1</span>
<span class="t" style="left:12.20px;top:462.90px;transform:scaleX(0.9163)">Básico</span>
<span class="t" style="left:12.20px;top:477.90px;transform:scaleX(0.8876)">16,00 GB</span>
<span class="t" style="left:12.20px;top:492.90px;transform:scaleX(0.9198)">En línea</span>
<span class="t b" style="left:121.40px;top:464.70px;transform:scaleX(0.8302)">(E:)</span>
<span class="t" style="left:115.30px;top:479.20px;transform:scaleX(0.8786)">16,00 GB NTFS</span>
<span class="t" style="left:115.30px;top:494.20px;transform:scaleX(1.0019)">Correcto (Partición primaria)</span>
<div style="left:742.2px;top:352.3px;width:1.9px;height:91.5px;background:#8b8b8b;border-radius:1px;"></div>
</main>
<footer id="legend">
<div style="left:3.2px;top:551px;width:731.8px;height:1.1px;background:#fff;"></div>
<div style="left:7.6px;top:553.3px;width:12.5px;height:14.4px;background:#fff;"></div>
<div style="left:8.6px;top:554.3px;width:10.5px;height:12.4px;background:#000;"></div>
<div style="left:96px;top:553.3px;width:11.6px;height:14.4px;background:#fff;"></div>
<div style="left:97px;top:554.3px;width:9.6px;height:12.4px;background:#000084;"></div>
<span class="t" style="left:24.50px;top:552.80px;transform:scaleX(0.9821)">No asignado</span>
<span class="t" style="left:111.70px;top:552.80px;transform:scaleX(1.0022)">Partición primaria</span>
<div style="left:750.2px;top:551px;width:1.1px;height:20px;background:#8a8a8a;"></div>
<div style="left:2.2px;top:569.9px;width:749.1px;height:1.2px;background:#969696;"></div>
<div style="left:1px;top:571.1px;width:752px;height:1.9px;background:#fff;"></div>
<div style="left:1px;top:573px;width:752px;height:1.1px;background:#dedede;"></div>
</footer>
<footer id="statusbar">
<div style="left:531.5px;top:575px;width:1px;height:20px;background:#dcdcdc;"></div>
<div style="left:532.5px;top:575px;width:1px;height:20px;background:#fff;"></div>
<div style="left:664.5px;top:575px;width:1px;height:20px;background:#dcdcdc;"></div>
<div style="left:665.5px;top:575px;width:1px;height:20px;background:#fff;"></div>
</footer>
<svg style="left:693px;top:537px" width="58" height="58" viewBox="693 537 58 58">
<circle cx="721.1" cy="565.2" r="25.4" fill="rgba(248,249,252,0.66)" stroke="rgba(206,216,232,0.55)" stroke-width="1"/>
<path d="M721.6 575.3C721.2 574.9 720.1 573.6 718.9 572.7C717.8 571.8 716.2 570.9 714.7 570.0C713.1 569.1 711.3 568.5 709.8 567.3C708.4 566.1 707.0 564.7 706.1 563.0C705.2 561.3 704.5 559.1 704.5 557.1C704.5 555.2 705.1 553.0 706.1 551.2C707.1 549.4 708.7 547.6 710.4 546.4C712.1 545.2 714.3 544.4 716.3 543.9C718.2 543.5 720.2 543.4 722.2 543.7C724.1 544.0 726.4 544.7 728.1 545.7C729.8 546.6 731.4 548.1 732.3 549.6C733.3 551.2 733.9 553.2 734.0 555.0C734.0 556.8 733.4 558.6 732.9 560.3C732.3 562.0 731.3 563.6 730.7 565.2C730.2 566.7 729.6 568.1 729.5 569.4C729.3 570.8 730.3 572.5 729.9 573.5C729.5 574.6 728.1 575.0 727.0 575.9C725.9 576.8 724.0 578.2 723.2 579.1C722.4 580.0 722.3 580.7 722.2 581.0M722.2 581.0C722.8 581.0 724.4 581.0 725.9 580.7C727.4 580.4 729.8 579.5 731.3 579.1C732.8 578.7 734.4 578.7 735.0 578.6M735.0 578.6C734.9 578.9 735.2 579.8 734.5 580.7C733.8 581.6 732.4 582.8 730.7 583.9C729.0 585.1 725.4 587.0 724.3 587.7" fill="none" stroke="#4f82c8" stroke-width="1.3" stroke-linecap="round" stroke-linejoin="round"/>
</svg>
</section>
</body>
</html>
